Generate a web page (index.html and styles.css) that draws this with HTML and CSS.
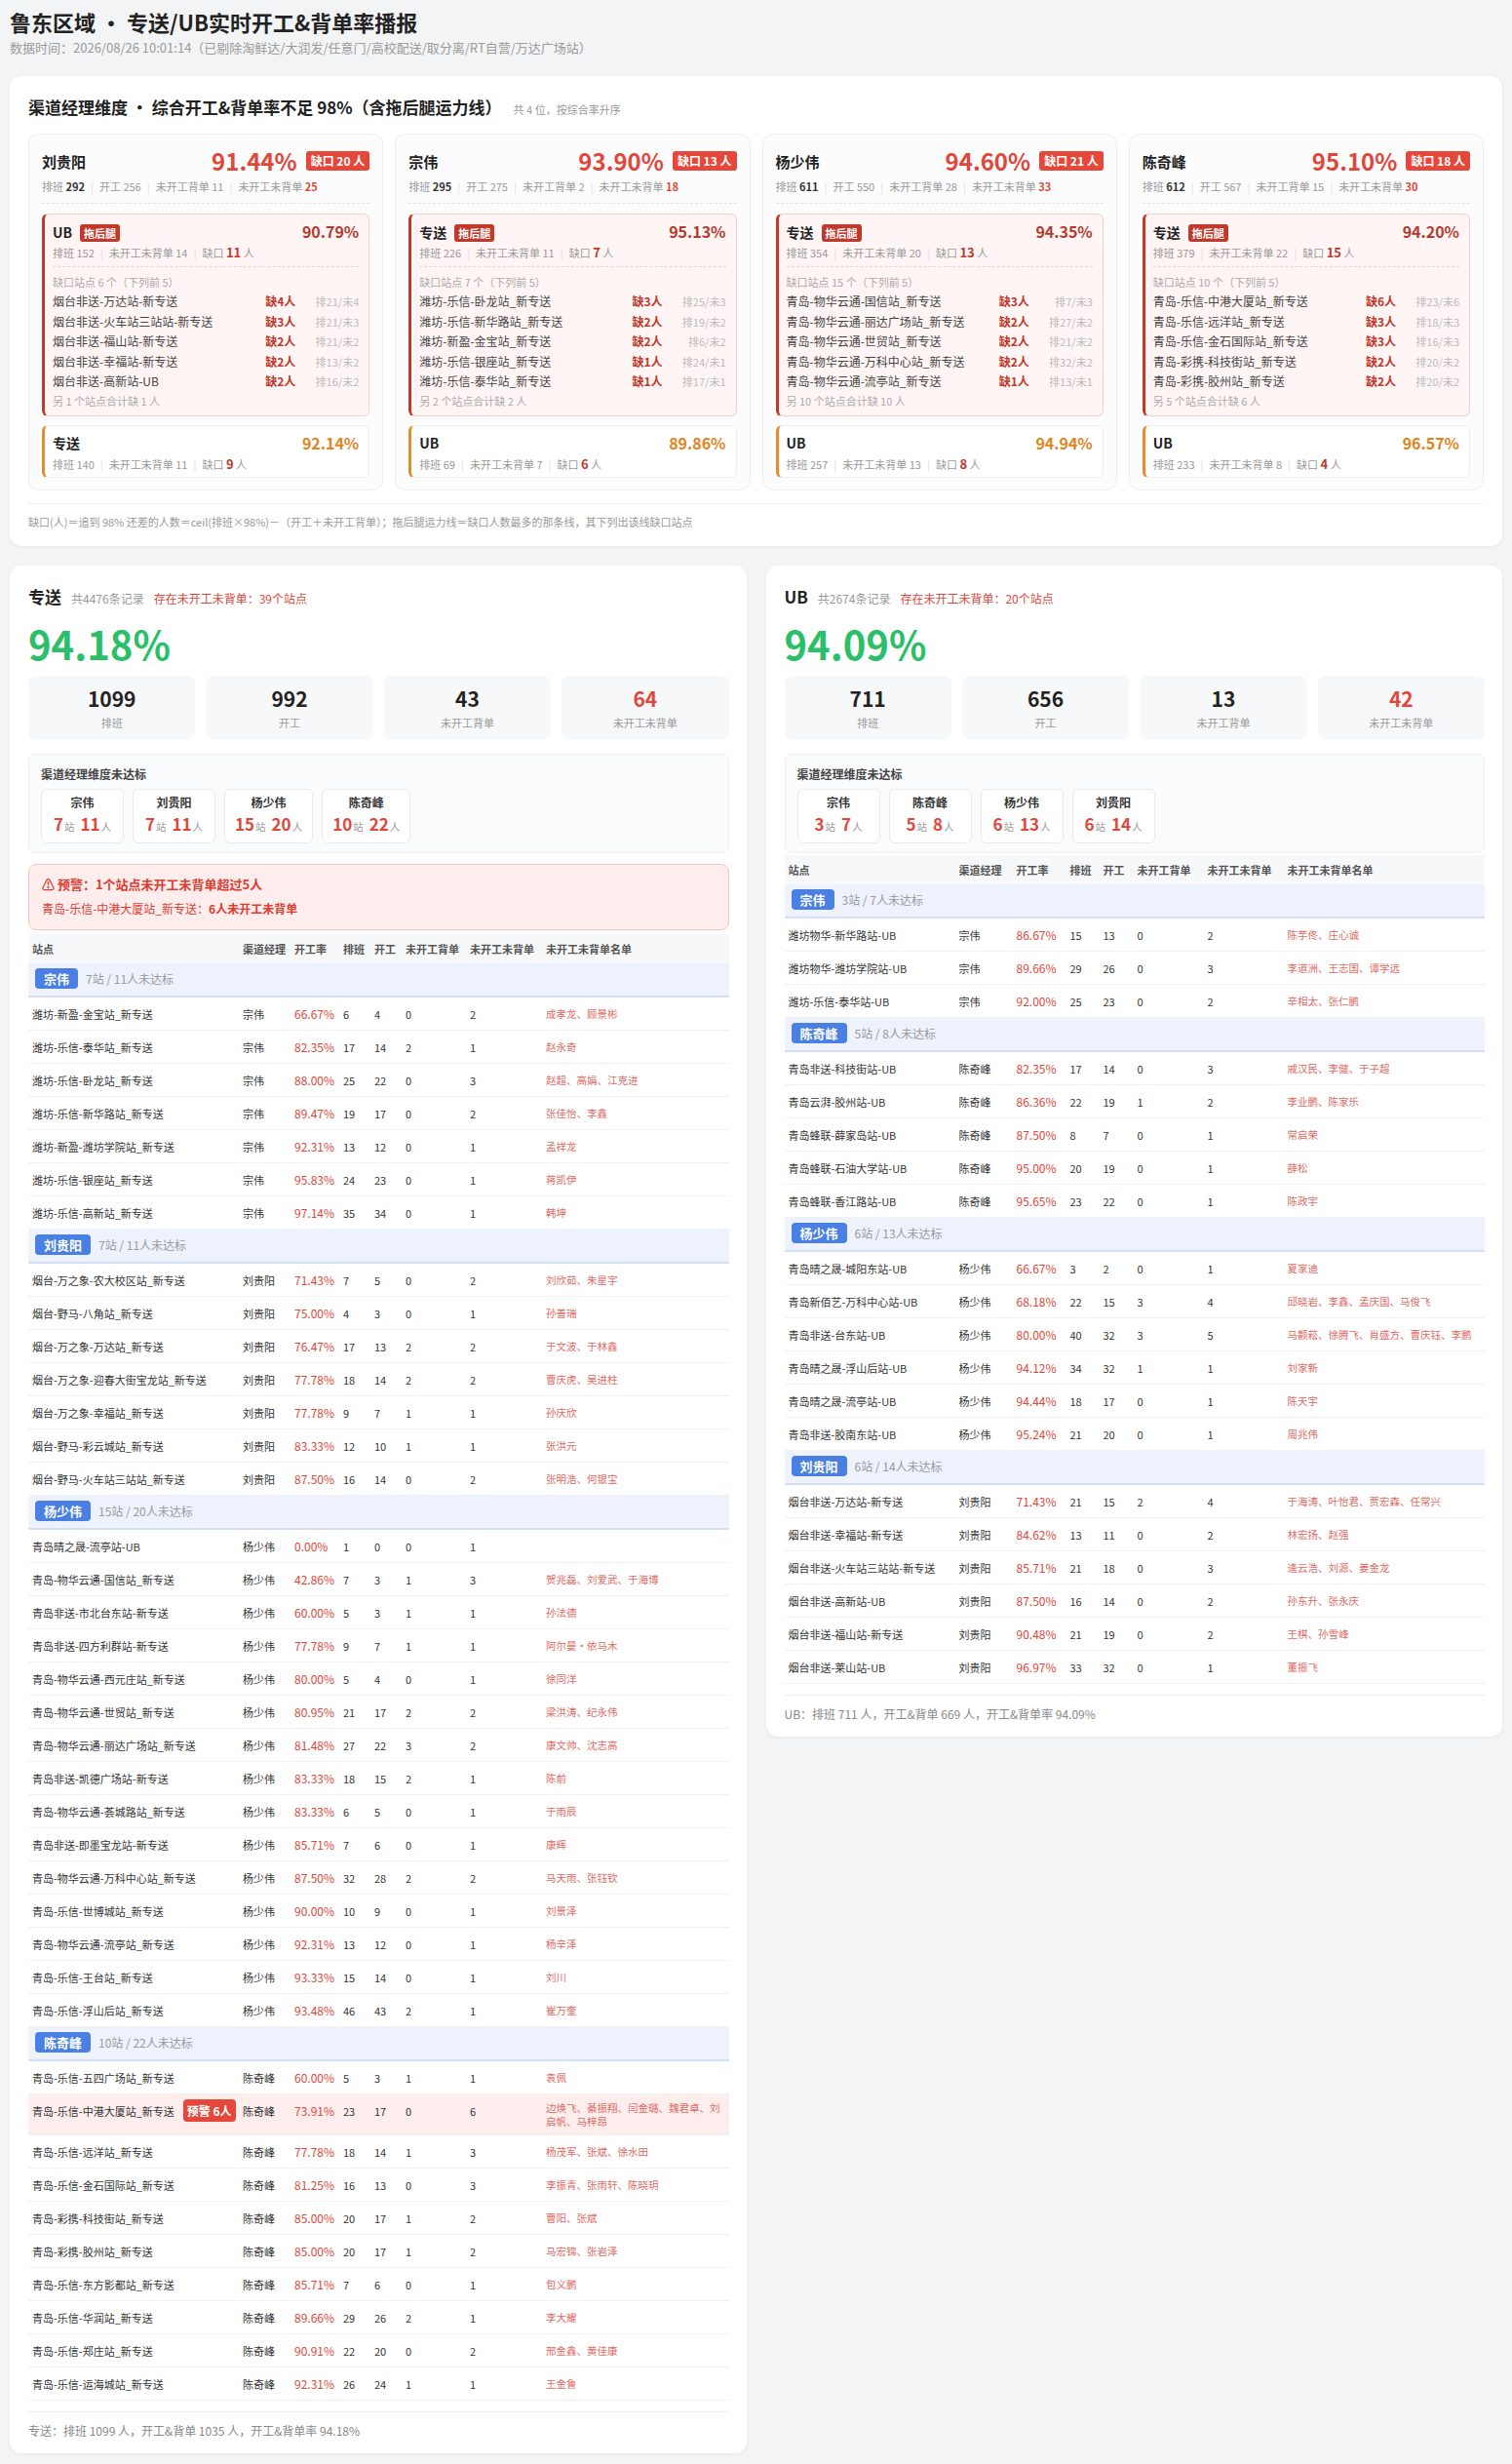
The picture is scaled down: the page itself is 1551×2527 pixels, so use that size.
FILE: index.html
```html
<!DOCTYPE html>
<html lang="zh-CN">
<head>
<meta charset="utf-8">
<title>鲁东区域 专送/UB实时开工&背单率播报</title>
<link rel="stylesheet" href="styles.css">
</head>
<body>
<h1 class="page-title">鲁东区域 • 专送/UB实时开工&amp;背单率播报</h1>
<div class="page-sub">数据时间：2026/08/26 10:01:14（已剔除淘鲜达/大润发/任意门/高校配送/取分离/RT自营/万达广场站）</div>

<section class="panel top-panel">
  <div class="sec-title">渠道经理维度 • 综合开工&amp;背单率不足 98%（含拖后腿运力线）<span class="sec-hint">共 4 位，按综合率升序</span></div>
  <div class="cards">
    <!-- card 1 -->
    <div class="mcard">
      <div class="mcard-head"><span class="mname">刘贵阳</span><span class="mright"><span class="mpct">91.44%</span><span class="gap-badge">缺口 20 人</span></span></div>
      <div class="mstats">排班 <b>292</b><span class="sep">|</span>开工 256<span class="sep">|</span>未开工背单 11<span class="sep">|</span>未开工未背单 <b class="r">25</b></div>
      <div class="line-card bad">
        <div class="lc-head"><span><span class="lc-name">UB</span><span class="drag">拖后腿</span></span><span class="lc-pct">90.79%</span></div>
        <div class="lc-stats">排班 152<span class="sep">|</span>未开工未背单 14<span class="sep">|</span>缺口 <b>11</b> 人</div>
        <div class="lc-list">
          <div class="lc-list-title">缺口站点 6 个（下列前 5）</div>
          <div class="lc-rows">
            <div class="lc-row"><span>烟台非送-万达站-新专送</span><span class="lack">缺4人</span><span class="meta">排21/未4</span></div>
            <div class="lc-row"><span>烟台非送-火车站三站站-新专送</span><span class="lack">缺3人</span><span class="meta">排21/未3</span></div>
            <div class="lc-row"><span>烟台非送-福山站-新专送</span><span class="lack">缺2人</span><span class="meta">排21/未2</span></div>
            <div class="lc-row"><span>烟台非送-幸福站-新专送</span><span class="lack">缺2人</span><span class="meta">排13/未2</span></div>
            <div class="lc-row"><span>烟台非送-高新站-UB</span><span class="lack">缺2人</span><span class="meta">排16/未2</span></div>
          </div>
          <div class="lc-more">另 1 个站点合计缺 1 人</div>
        </div>
      </div>
      <div class="line-card ok">
        <div class="lc-head"><span class="lc-name">专送</span><span class="lc-pct">92.14%</span></div>
        <div class="lc-stats">排班 140<span class="sep">|</span>未开工未背单 11<span class="sep">|</span>缺口 <b>9</b> 人</div>
      </div>
    </div>
    <!-- card 2 -->
    <div class="mcard">
      <div class="mcard-head"><span class="mname">宗伟</span><span class="mright"><span class="mpct">93.90%</span><span class="gap-badge">缺口 13 人</span></span></div>
      <div class="mstats">排班 <b>295</b><span class="sep">|</span>开工 275<span class="sep">|</span>未开工背单 2<span class="sep">|</span>未开工未背单 <b class="r">18</b></div>
      <div class="line-card bad">
        <div class="lc-head"><span><span class="lc-name">专送</span><span class="drag">拖后腿</span></span><span class="lc-pct">95.13%</span></div>
        <div class="lc-stats">排班 226<span class="sep">|</span>未开工未背单 11<span class="sep">|</span>缺口 <b>7</b> 人</div>
        <div class="lc-list">
          <div class="lc-list-title">缺口站点 7 个（下列前 5）</div>
          <div class="lc-rows">
            <div class="lc-row"><span>潍坊-乐信-卧龙站_新专送</span><span class="lack">缺3人</span><span class="meta">排25/未3</span></div>
            <div class="lc-row"><span>潍坊-乐信-新华路站_新专送</span><span class="lack">缺2人</span><span class="meta">排19/未2</span></div>
            <div class="lc-row"><span>潍坊-新盈-金宝站_新专送</span><span class="lack">缺2人</span><span class="meta">排6/未2</span></div>
            <div class="lc-row"><span>潍坊-乐信-银座站_新专送</span><span class="lack">缺1人</span><span class="meta">排24/未1</span></div>
            <div class="lc-row"><span>潍坊-乐信-泰华站_新专送</span><span class="lack">缺1人</span><span class="meta">排17/未1</span></div>
          </div>
          <div class="lc-more">另 2 个站点合计缺 2 人</div>
        </div>
      </div>
      <div class="line-card ok">
        <div class="lc-head"><span class="lc-name">UB</span><span class="lc-pct">89.86%</span></div>
        <div class="lc-stats">排班 69<span class="sep">|</span>未开工未背单 7<span class="sep">|</span>缺口 <b>6</b> 人</div>
      </div>
    </div>
    <!-- card 3 -->
    <div class="mcard">
      <div class="mcard-head"><span class="mname">杨少伟</span><span class="mright"><span class="mpct">94.60%</span><span class="gap-badge">缺口 21 人</span></span></div>
      <div class="mstats">排班 <b>611</b><span class="sep">|</span>开工 550<span class="sep">|</span>未开工背单 28<span class="sep">|</span>未开工未背单 <b class="r">33</b></div>
      <div class="line-card bad">
        <div class="lc-head"><span><span class="lc-name">专送</span><span class="drag">拖后腿</span></span><span class="lc-pct">94.35%</span></div>
        <div class="lc-stats">排班 354<span class="sep">|</span>未开工未背单 20<span class="sep">|</span>缺口 <b>13</b> 人</div>
        <div class="lc-list">
          <div class="lc-list-title">缺口站点 15 个（下列前 5）</div>
          <div class="lc-rows">
            <div class="lc-row"><span>青岛-物华云通-国信站_新专送</span><span class="lack">缺3人</span><span class="meta">排7/未3</span></div>
            <div class="lc-row"><span>青岛-物华云通-丽达广场站_新专送</span><span class="lack">缺2人</span><span class="meta">排27/未2</span></div>
            <div class="lc-row"><span>青岛-物华云通-世贸站_新专送</span><span class="lack">缺2人</span><span class="meta">排21/未2</span></div>
            <div class="lc-row"><span>青岛-物华云通-万科中心站_新专送</span><span class="lack">缺2人</span><span class="meta">排32/未2</span></div>
            <div class="lc-row"><span>青岛-物华云通-流亭站_新专送</span><span class="lack">缺1人</span><span class="meta">排13/未1</span></div>
          </div>
          <div class="lc-more">另 10 个站点合计缺 10 人</div>
        </div>
      </div>
      <div class="line-card ok">
        <div class="lc-head"><span class="lc-name">UB</span><span class="lc-pct">94.94%</span></div>
        <div class="lc-stats">排班 257<span class="sep">|</span>未开工未背单 13<span class="sep">|</span>缺口 <b>8</b> 人</div>
      </div>
    </div>
    <!-- card 4 -->
    <div class="mcard">
      <div class="mcard-head"><span class="mname">陈奇峰</span><span class="mright"><span class="mpct">95.10%</span><span class="gap-badge">缺口 18 人</span></span></div>
      <div class="mstats">排班 <b>612</b><span class="sep">|</span>开工 567<span class="sep">|</span>未开工背单 15<span class="sep">|</span>未开工未背单 <b class="r">30</b></div>
      <div class="line-card bad">
        <div class="lc-head"><span><span class="lc-name">专送</span><span class="drag">拖后腿</span></span><span class="lc-pct">94.20%</span></div>
        <div class="lc-stats">排班 379<span class="sep">|</span>未开工未背单 22<span class="sep">|</span>缺口 <b>15</b> 人</div>
        <div class="lc-list">
          <div class="lc-list-title">缺口站点 10 个（下列前 5）</div>
          <div class="lc-rows">
            <div class="lc-row"><span>青岛-乐信-中港大厦站_新专送</span><span class="lack">缺6人</span><span class="meta">排23/未6</span></div>
            <div class="lc-row"><span>青岛-乐信-远洋站_新专送</span><span class="lack">缺3人</span><span class="meta">排18/未3</span></div>
            <div class="lc-row"><span>青岛-乐信-金石国际站_新专送</span><span class="lack">缺3人</span><span class="meta">排16/未3</span></div>
            <div class="lc-row"><span>青岛-彩携-科技街站_新专送</span><span class="lack">缺2人</span><span class="meta">排20/未2</span></div>
            <div class="lc-row"><span>青岛-彩携-胶州站_新专送</span><span class="lack">缺2人</span><span class="meta">排20/未2</span></div>
          </div>
          <div class="lc-more">另 5 个站点合计缺 6 人</div>
        </div>
      </div>
      <div class="line-card ok">
        <div class="lc-head"><span class="lc-name">UB</span><span class="lc-pct">96.57%</span></div>
        <div class="lc-stats">排班 233<span class="sep">|</span>未开工未背单 8<span class="sep">|</span>缺口 <b>4</b> 人</div>
      </div>
    </div>
  </div>
  <div class="note">缺口(人)＝追到 98% 还差的人数＝ceil(排班×98%)－（开工＋未开工背单）；拖后腿运力线＝缺口人数最多的那条线，其下列出该线缺口站点</div>
</section>

<div class="cols">
  <!-- 专送 -->
  <section class="panel line-panel">
    <div class="lp-head"><span class="lp-title">专送</span><span class="lp-count">共4476条记录</span><span class="lp-warn">存在未开工未背单：39个站点</span></div>
    <div class="big-pct">94.18%</div>
    <div class="stat-grid">
      <div class="stat"><div class="stat-num">1099</div><div class="stat-label">排班</div></div>
      <div class="stat"><div class="stat-num">992</div><div class="stat-label">开工</div></div>
      <div class="stat"><div class="stat-num">43</div><div class="stat-label">未开工背单</div></div>
      <div class="stat"><div class="stat-num red">64</div><div class="stat-label">未开工未背单</div></div>
    </div>
    <div class="mgr-box">
      <div class="mgr-title">渠道经理维度未达标</div>
      <div class="chips">
        <div class="chip"><div class="chip-name">宗伟</div><div class="chip-val"><b>7</b><small>站</small><b>11</b><small>人</small></div></div>
        <div class="chip"><div class="chip-name">刘贵阳</div><div class="chip-val"><b>7</b><small>站</small><b>11</b><small>人</small></div></div>
        <div class="chip"><div class="chip-name">杨少伟</div><div class="chip-val"><b>15</b><small>站</small><b>20</b><small>人</small></div></div>
        <div class="chip"><div class="chip-name">陈奇峰</div><div class="chip-val"><b>10</b><small>站</small><b>22</b><small>人</small></div></div>
      </div>
    </div>
    <div class="alert">
      <div class="alert-title">⚠ 预警：1个站点未开工未背单超过5人</div>
      <div class="alert-detail">青岛-乐信-中港大厦站_新专送：<b>6人未开工未背单</b></div>
    </div>
    <table class="tbl tbl-zs">
      <colgroup><col class="c1"><col class="c2"><col class="c3"><col class="c4"><col class="c5"><col class="c6"><col class="c7"><col></colgroup>
      <thead><tr><th>站点</th><th>渠道经理</th><th>开工率</th><th>排班</th><th>开工</th><th>未开工背单</th><th>未开工未背单</th><th>未开工未背单名单</th></tr></thead>
      <tbody>
        <tr class="grp"><td colspan="8"><span class="grp-chip">宗伟</span><span class="grp-info">7站 / 11人未达标</span></td></tr>
        <tr><td>潍坊-新盈-金宝站_新专送</td><td>宗伟</td><td class="rate">66.67%</td><td>6</td><td>4</td><td>0</td><td>2</td><td class="names">成孝龙、顾景彬</td></tr>
        <tr><td>潍坊-乐信-泰华站_新专送</td><td>宗伟</td><td class="rate">82.35%</td><td>17</td><td>14</td><td>2</td><td>1</td><td class="names">赵永奇</td></tr>
        <tr><td>潍坊-乐信-卧龙站_新专送</td><td>宗伟</td><td class="rate">88.00%</td><td>25</td><td>22</td><td>0</td><td>3</td><td class="names">赵超、高娟、江克进</td></tr>
        <tr><td>潍坊-乐信-新华路站_新专送</td><td>宗伟</td><td class="rate">89.47%</td><td>19</td><td>17</td><td>0</td><td>2</td><td class="names">张佳怡、李鑫</td></tr>
        <tr><td>潍坊-新盈-潍坊学院站_新专送</td><td>宗伟</td><td class="rate">92.31%</td><td>13</td><td>12</td><td>0</td><td>1</td><td class="names">孟祥龙</td></tr>
        <tr><td>潍坊-乐信-银座站_新专送</td><td>宗伟</td><td class="rate">95.83%</td><td>24</td><td>23</td><td>0</td><td>1</td><td class="names">蒋凯伊</td></tr>
        <tr><td>潍坊-乐信-高新站_新专送</td><td>宗伟</td><td class="rate">97.14%</td><td>35</td><td>34</td><td>0</td><td>1</td><td class="names">韩坤</td></tr>
        <tr class="grp"><td colspan="8"><span class="grp-chip">刘贵阳</span><span class="grp-info">7站 / 11人未达标</span></td></tr>
        <tr><td>烟台-万之象-农大校区站_新专送</td><td>刘贵阳</td><td class="rate">71.43%</td><td>7</td><td>5</td><td>0</td><td>2</td><td class="names">刘欣茹、朱星宇</td></tr>
        <tr><td>烟台-野马-八角站_新专送</td><td>刘贵阳</td><td class="rate">75.00%</td><td>4</td><td>3</td><td>0</td><td>1</td><td class="names">孙善瑞</td></tr>
        <tr><td>烟台-万之象-万达站_新专送</td><td>刘贵阳</td><td class="rate">76.47%</td><td>17</td><td>13</td><td>2</td><td>2</td><td class="names">于文波、于林鑫</td></tr>
        <tr><td>烟台-万之象-迎春大街宝龙站_新专送</td><td>刘贵阳</td><td class="rate">77.78%</td><td>18</td><td>14</td><td>2</td><td>2</td><td class="names">曹庆虎、吴进柱</td></tr>
        <tr><td>烟台-万之象-幸福站_新专送</td><td>刘贵阳</td><td class="rate">77.78%</td><td>9</td><td>7</td><td>1</td><td>1</td><td class="names">孙庆欣</td></tr>
        <tr><td>烟台-野马-彩云城站_新专送</td><td>刘贵阳</td><td class="rate">83.33%</td><td>12</td><td>10</td><td>1</td><td>1</td><td class="names">张洪元</td></tr>
        <tr><td>烟台-野马-火车站三站站_新专送</td><td>刘贵阳</td><td class="rate">87.50%</td><td>16</td><td>14</td><td>0</td><td>2</td><td class="names">张明浩、何银宝</td></tr>
        <tr class="grp"><td colspan="8"><span class="grp-chip">杨少伟</span><span class="grp-info">15站 / 20人未达标</span></td></tr>
        <tr><td>青岛晴之晟-流亭站-UB</td><td>杨少伟</td><td class="rate">0.00%</td><td>1</td><td>0</td><td>0</td><td>1</td><td class="names"></td></tr>
        <tr><td>青岛-物华云通-国信站_新专送</td><td>杨少伟</td><td class="rate">42.86%</td><td>7</td><td>3</td><td>1</td><td>3</td><td class="names">贺兆磊、刘爱武、于海博</td></tr>
        <tr><td>青岛非送-市北台东站-新专送</td><td>杨少伟</td><td class="rate">60.00%</td><td>5</td><td>3</td><td>1</td><td>1</td><td class="names">孙法德</td></tr>
        <tr><td>青岛非送-四方利群站-新专送</td><td>杨少伟</td><td class="rate">77.78%</td><td>9</td><td>7</td><td>1</td><td>1</td><td class="names">阿尔曼·依马木</td></tr>
        <tr><td>青岛-物华云通-西元庄站_新专送</td><td>杨少伟</td><td class="rate">80.00%</td><td>5</td><td>4</td><td>0</td><td>1</td><td class="names">徐同洋</td></tr>
        <tr><td>青岛-物华云通-世贸站_新专送</td><td>杨少伟</td><td class="rate">80.95%</td><td>21</td><td>17</td><td>2</td><td>2</td><td class="names">梁洪涛、纪永伟</td></tr>
        <tr><td>青岛-物华云通-丽达广场站_新专送</td><td>杨少伟</td><td class="rate">81.48%</td><td>27</td><td>22</td><td>3</td><td>2</td><td class="names">康文帅、沈志高</td></tr>
        <tr><td>青岛非送-凯德广场站-新专送</td><td>杨少伟</td><td class="rate">83.33%</td><td>18</td><td>15</td><td>2</td><td>1</td><td class="names">陈前</td></tr>
        <tr><td>青岛-物华云通-荟城路站_新专送</td><td>杨少伟</td><td class="rate">83.33%</td><td>6</td><td>5</td><td>0</td><td>1</td><td class="names">于雨辰</td></tr>
        <tr><td>青岛非送-即墨宝龙站-新专送</td><td>杨少伟</td><td class="rate">85.71%</td><td>7</td><td>6</td><td>0</td><td>1</td><td class="names">康辉</td></tr>
        <tr><td>青岛-物华云通-万科中心站_新专送</td><td>杨少伟</td><td class="rate">87.50%</td><td>32</td><td>28</td><td>2</td><td>2</td><td class="names">马天雨、张钰钦</td></tr>
        <tr><td>青岛-乐信-世博城站_新专送</td><td>杨少伟</td><td class="rate">90.00%</td><td>10</td><td>9</td><td>0</td><td>1</td><td class="names">刘景泽</td></tr>
        <tr><td>青岛-物华云通-流亭站_新专送</td><td>杨少伟</td><td class="rate">92.31%</td><td>13</td><td>12</td><td>0</td><td>1</td><td class="names">杨辛泽</td></tr>
        <tr><td>青岛-乐信-王台站_新专送</td><td>杨少伟</td><td class="rate">93.33%</td><td>15</td><td>14</td><td>0</td><td>1</td><td class="names">刘川</td></tr>
        <tr><td>青岛-乐信-浮山后站_新专送</td><td>杨少伟</td><td class="rate">93.48%</td><td>46</td><td>43</td><td>2</td><td>1</td><td class="names">崔万奎</td></tr>
        <tr class="grp"><td colspan="8"><span class="grp-chip">陈奇峰</span><span class="grp-info">10站 / 22人未达标</span></td></tr>
        <tr><td>青岛-乐信-五四广场站_新专送</td><td>陈奇峰</td><td class="rate">60.00%</td><td>5</td><td>3</td><td>1</td><td>1</td><td class="names">袁佩</td></tr>
        <tr class="warn"><td>青岛-乐信-中港大厦站_新专送<span class="warn-badge">预警 6人</span></td><td>陈奇峰</td><td class="rate">73.91%</td><td>23</td><td>17</td><td>0</td><td>6</td><td class="names">边焕飞、綦振翔、闫金璐、魏君卓、刘启帆、马梓昂</td></tr>
        <tr><td>青岛-乐信-远洋站_新专送</td><td>陈奇峰</td><td class="rate">77.78%</td><td>18</td><td>14</td><td>1</td><td>3</td><td class="names">杨茂军、张斌、徐水田</td></tr>
        <tr><td>青岛-乐信-金石国际站_新专送</td><td>陈奇峰</td><td class="rate">81.25%</td><td>16</td><td>13</td><td>0</td><td>3</td><td class="names">李振青、张雨轩、陈晓玥</td></tr>
        <tr><td>青岛-彩携-科技街站_新专送</td><td>陈奇峰</td><td class="rate">85.00%</td><td>20</td><td>17</td><td>1</td><td>2</td><td class="names">曹阳、张斌</td></tr>
        <tr><td>青岛-彩携-胶州站_新专送</td><td>陈奇峰</td><td class="rate">85.00%</td><td>20</td><td>17</td><td>1</td><td>2</td><td class="names">马宏锦、张岩泽</td></tr>
        <tr><td>青岛-乐信-东方影都站_新专送</td><td>陈奇峰</td><td class="rate">85.71%</td><td>7</td><td>6</td><td>0</td><td>1</td><td class="names">包义鹏</td></tr>
        <tr><td>青岛-乐信-华润站_新专送</td><td>陈奇峰</td><td class="rate">89.66%</td><td>29</td><td>26</td><td>2</td><td>1</td><td class="names">李大耀</td></tr>
        <tr><td>青岛-乐信-郑庄站_新专送</td><td>陈奇峰</td><td class="rate">90.91%</td><td>22</td><td>20</td><td>0</td><td>2</td><td class="names">邢金鑫、黄佳康</td></tr>
        <tr><td>青岛-乐信-运海城站_新专送</td><td>陈奇峰</td><td class="rate">92.31%</td><td>26</td><td>24</td><td>1</td><td>1</td><td class="names">王金鲁</td></tr>
      </tbody>
    </table>
    <div class="foot">专送：排班 1099 人，开工&amp;背单 1035 人，开工&amp;背单率 94.18%</div>
  </section>

  <!-- UB -->
  <section class="panel line-panel">
    <div class="lp-head"><span class="lp-title">UB</span><span class="lp-count">共2674条记录</span><span class="lp-warn">存在未开工未背单：20个站点</span></div>
    <div class="big-pct">94.09%</div>
    <div class="stat-grid">
      <div class="stat"><div class="stat-num">711</div><div class="stat-label">排班</div></div>
      <div class="stat"><div class="stat-num">656</div><div class="stat-label">开工</div></div>
      <div class="stat"><div class="stat-num">13</div><div class="stat-label">未开工背单</div></div>
      <div class="stat"><div class="stat-num red">42</div><div class="stat-label">未开工未背单</div></div>
    </div>
    <div class="mgr-box">
      <div class="mgr-title">渠道经理维度未达标</div>
      <div class="chips">
        <div class="chip"><div class="chip-name">宗伟</div><div class="chip-val"><b>3</b><small>站</small><b>7</b><small>人</small></div></div>
        <div class="chip"><div class="chip-name">陈奇峰</div><div class="chip-val"><b>5</b><small>站</small><b>8</b><small>人</small></div></div>
        <div class="chip"><div class="chip-name">杨少伟</div><div class="chip-val"><b>6</b><small>站</small><b>13</b><small>人</small></div></div>
        <div class="chip"><div class="chip-name">刘贵阳</div><div class="chip-val"><b>6</b><small>站</small><b>14</b><small>人</small></div></div>
      </div>
    </div>
    <table class="tbl tbl-ub">
      <colgroup><col class="c1"><col class="c2"><col class="c3"><col class="c4"><col class="c5"><col class="c6"><col class="c7"><col></colgroup>
      <thead><tr><th>站点</th><th>渠道经理</th><th>开工率</th><th>排班</th><th>开工</th><th>未开工背单</th><th>未开工未背单</th><th>未开工未背单名单</th></tr></thead>
      <tbody>
        <tr class="grp"><td colspan="8"><span class="grp-chip">宗伟</span><span class="grp-info">3站 / 7人未达标</span></td></tr>
        <tr><td>潍坊物华-新华路站-UB</td><td>宗伟</td><td class="rate">86.67%</td><td>15</td><td>13</td><td>0</td><td>2</td><td class="names">陈芋佟、庄心诚</td></tr>
        <tr><td>潍坊物华-潍坊学院站-UB</td><td>宗伟</td><td class="rate">89.66%</td><td>29</td><td>26</td><td>0</td><td>3</td><td class="names">李道洲、王志国、谭学远</td></tr>
        <tr><td>潍坊-乐信-泰华站-UB</td><td>宗伟</td><td class="rate">92.00%</td><td>25</td><td>23</td><td>0</td><td>2</td><td class="names">辛相太、张仁鹏</td></tr>
        <tr class="grp"><td colspan="8"><span class="grp-chip">陈奇峰</span><span class="grp-info">5站 / 8人未达标</span></td></tr>
        <tr><td>青岛非送-科技街站-UB</td><td>陈奇峰</td><td class="rate">82.35%</td><td>17</td><td>14</td><td>0</td><td>3</td><td class="names">戚汉民、李健、于子超</td></tr>
        <tr><td>青岛云湃-胶州站-UB</td><td>陈奇峰</td><td class="rate">86.36%</td><td>22</td><td>19</td><td>1</td><td>2</td><td class="names">李业鹏、陈家乐</td></tr>
        <tr><td>青岛蜂联-薛家岛站-UB</td><td>陈奇峰</td><td class="rate">87.50%</td><td>8</td><td>7</td><td>0</td><td>1</td><td class="names">常启荣</td></tr>
        <tr><td>青岛蜂联-石油大学站-UB</td><td>陈奇峰</td><td class="rate">95.00%</td><td>20</td><td>19</td><td>0</td><td>1</td><td class="names">薛松</td></tr>
        <tr><td>青岛蜂联-香江路站-UB</td><td>陈奇峰</td><td class="rate">95.65%</td><td>23</td><td>22</td><td>0</td><td>1</td><td class="names">陈政宇</td></tr>
        <tr class="grp"><td colspan="8"><span class="grp-chip">杨少伟</span><span class="grp-info">6站 / 13人未达标</span></td></tr>
        <tr><td>青岛晴之晟-城阳东站-UB</td><td>杨少伟</td><td class="rate">66.67%</td><td>3</td><td>2</td><td>0</td><td>1</td><td class="names">夏家迪</td></tr>
        <tr><td>青岛新佰艺-万科中心站-UB</td><td>杨少伟</td><td class="rate">68.18%</td><td>22</td><td>15</td><td>3</td><td>4</td><td class="names">邱晓岩、李鑫、孟庆国、马俊飞</td></tr>
        <tr><td>青岛非送-台东站-UB</td><td>杨少伟</td><td class="rate">80.00%</td><td>40</td><td>32</td><td>3</td><td>5</td><td class="names">马颧菘、徐腾飞、肖盛方、曹庆钰、李鹏</td></tr>
        <tr><td>青岛晴之晟-浮山后站-UB</td><td>杨少伟</td><td class="rate">94.12%</td><td>34</td><td>32</td><td>1</td><td>1</td><td class="names">刘家新</td></tr>
        <tr><td>青岛晴之晟-流亭站-UB</td><td>杨少伟</td><td class="rate">94.44%</td><td>18</td><td>17</td><td>0</td><td>1</td><td class="names">陈天宇</td></tr>
        <tr><td>青岛非送-胶南东站-UB</td><td>杨少伟</td><td class="rate">95.24%</td><td>21</td><td>20</td><td>0</td><td>1</td><td class="names">周兆伟</td></tr>
        <tr class="grp"><td colspan="8"><span class="grp-chip">刘贵阳</span><span class="grp-info">6站 / 14人未达标</span></td></tr>
        <tr><td>烟台非送-万达站-新专送</td><td>刘贵阳</td><td class="rate">71.43%</td><td>21</td><td>15</td><td>2</td><td>4</td><td class="names">于海涛、叶怡君、贾宏森、任常兴</td></tr>
        <tr><td>烟台非送-幸福站-新专送</td><td>刘贵阳</td><td class="rate">84.62%</td><td>13</td><td>11</td><td>0</td><td>2</td><td class="names">林宏扬、赵强</td></tr>
        <tr><td>烟台非送-火车站三站站-新专送</td><td>刘贵阳</td><td class="rate">85.71%</td><td>21</td><td>18</td><td>0</td><td>3</td><td class="names">逄云浩、刘源、姜金龙</td></tr>
        <tr><td>烟台非送-高新站-UB</td><td>刘贵阳</td><td class="rate">87.50%</td><td>16</td><td>14</td><td>0</td><td>2</td><td class="names">孙东升、张永庆</td></tr>
        <tr><td>烟台非送-福山站-新专送</td><td>刘贵阳</td><td class="rate">90.48%</td><td>21</td><td>19</td><td>0</td><td>2</td><td class="names">王棋、孙雪峰</td></tr>
        <tr><td>烟台非送-莱山站-UB</td><td>刘贵阳</td><td class="rate">96.97%</td><td>33</td><td>32</td><td>0</td><td>1</td><td class="names">董振飞</td></tr>
      </tbody>
    </table>
    <div class="foot">UB：排班 711 人，开工&amp;背单 669 人，开工&amp;背单率 94.09%</div>
  </section>
</div>
</body>
</html>
```

FILE: styles.css
```css
* { box-sizing: border-box; }
html, body { margin: 0; }
body {
  background: #f3f4f6;
  font-family: "Noto Sans CJK SC", "Noto Sans", "Liberation Sans", sans-serif;
  color: #222;
  padding: 8px 10px 10px;
}
.page-title { margin: 0; font-size: 22px; line-height: 28px; font-weight: 700; color: #222; }
.page-sub { margin-top: 4px; font-size: 13px; line-height: 18px; color: #9a9a9a; }

.panel {
  background: #fff;
  border-radius: 12px;
  box-shadow: 0 1px 4px rgba(0, 0, 0, 0.05);
}

/* top panel */
.top-panel { margin-top: 20px; padding: 20px 19px 17px; }
.sec-title { font-size: 17px; line-height: 24px; font-weight: 700; color: #222; margin-bottom: 13px; }
.sec-hint { font-size: 11px; font-weight: 400; color: #999; margin-left: 12px; }
.cards { display: grid; grid-template-columns: repeat(4, 1fr); gap: 12px; }
.mcard {
  background: #fcfcfd;
  border: 1px solid #eceef1;
  border-radius: 10px;
  padding: 13px 13px 12px;
}
.mcard-head { display: flex; justify-content: space-between; align-items: center; height: 28px; }
.mname { font-size: 15px; font-weight: 700; color: #222; }
.mright { display: flex; align-items: center; }
.mpct { font-size: 24px; line-height: 28px; font-weight: 700; color: #e0473a; }
.gap-badge {
  margin-left: 9px;
  background: #e5483b;
  color: #fff;
  font-size: 12px;
  font-weight: 700;
  line-height: 20px;
  padding: 0 5px;
  border-radius: 3px;
}
.mstats {
  margin-top: 4px;
  font-size: 11px;
  line-height: 16px;
  color: #999;
  padding-bottom: 9px;
  border-bottom: 1px dashed #e3e3e3;
  white-space: nowrap;
}
.mstats b { color: #333; font-weight: 700; }
.mstats b.r { color: #e0473a; }
.sep { color: #ddd; margin: 0 6px; }

.line-card {
  border: 1px solid #eee;
  border-left: 3px solid #c0392b;
  border-radius: 6px;
  padding: 7px 10px 7px 8px;
}
.line-card.bad { margin-top: 10px; background: #fff5f4; border-color: #f2d2cf; border-left-color: #c0392b; }
.line-card.ok { margin-top: 9px; background: #fff; border-color: #eeeeee; border-left-color: #e8892a; padding-bottom: 5px; }
.lc-head { display: flex; justify-content: space-between; align-items: center; height: 20px; }
.lc-name { font-size: 14px; font-weight: 700; color: #222; }
.drag {
  margin-left: 8px;
  background: #c0392b;
  color: #fff;
  font-size: 11px;
  font-weight: 700;
  line-height: 17px;
  padding: 1px 4px;
  border-radius: 3px;
}
.lc-pct { font-size: 16px; font-weight: 700; color: #b53a2e; }
.line-card.ok .lc-pct { color: #e0841c; }
.lc-stats { margin-top: 4px; font-size: 11px; line-height: 16px; color: #999; white-space: nowrap; }
.lc-stats b { color: #c0392b; font-size: 13px; font-weight: 700; }
.lc-list { margin-top: 6px; border-top: 1px dashed #ecd3d0; padding-top: 7px; }
.lc-list-title { font-size: 11px; line-height: 16px; color: #aaa; }
.lc-rows { margin-top: 2px; }
.lc-row {
  display: grid;
  grid-template-columns: 1fr 46px 50px;
  font-size: 12px;
  line-height: 20.5px;
  color: #444;
  white-space: nowrap;
}
.lc-row .lack { color: #c0392b; font-weight: 700; }
.lc-row .meta { color: #bbb; font-size: 11px; text-align: right; }
.lc-more { margin-top: 1px; font-size: 11px; line-height: 16px; color: #aaa; }
.note {
  margin-top: 13px;
  border-top: 1px solid #eee;
  padding-top: 10px;
  font-size: 11px;
  line-height: 16px;
  color: #999;
}

/* line panels */
.cols { display: grid; grid-template-columns: 1fr 1fr; gap: 20px; margin-top: 20px; align-items: start; }
.line-panel { padding: 20px 18px 14px 19px; }
.lp-head { display: flex; align-items: baseline; line-height: 24px; white-space: nowrap; }
.lp-title { font-size: 17px; font-weight: 700; color: #222; }
.lp-count { font-size: 12px; color: #999; margin-left: 10px; }
.lp-warn { font-size: 12px; color: #e0473a; margin-left: 10px; }
.big-pct { margin-top: 11px; font-size: 40px; line-height: 46px; font-weight: 700; color: #2bbf69; }
.stat-grid { display: grid; grid-template-columns: repeat(4, 1fr); gap: 11px; margin-top: 10px; }
.stat { background: #f7f8fa; border-radius: 8px; height: 66px; padding-top: 10px; text-align: center; }
.stat-num { font-size: 21px; line-height: 26px; font-weight: 700; color: #222; }
.stat-num.red { color: #e0473a; }
.stat-label { margin-top: 4px; font-size: 11px; line-height: 16px; color: #999; }

.mgr-box {
  margin-top: 14px;
  background: #fafbfc;
  border: 1px solid #eef0f3;
  border-radius: 8px;
  padding: 11px 12px 9px;
}
.mgr-title { font-size: 12px; line-height: 18px; font-weight: 700; color: #444; }
.chips { display: flex; gap: 9px; margin-top: 6px; }
.chip {
  min-width: 85px;
  height: 56px;
  padding: 0 10px;
  background: #fff;
  border: 1px solid #e7e9ec;
  border-radius: 6px;
  display: flex;
  flex-direction: column;
  align-items: center;
  justify-content: center;
}
.chip-name { font-size: 12px; line-height: 18px; font-weight: 700; color: #333; }
.chip-val { margin-top: 2px; line-height: 22px; white-space: nowrap; }
.chip-val b { font-size: 17px; font-weight: 700; color: #e0473a; }
.chip-val small { font-size: 10.5px; color: #999; margin: 0 6px 0 1px; }
.chip-val small:last-child { margin-right: 0; }

.alert {
  margin-top: 11px;
  margin-bottom: 4px;
  background: #fdeeed;
  border: 1px solid #f5c8c4;
  border-radius: 8px;
  padding: 11px 13px 12px;
  color: #e03b30;
}
.alert-title { font-size: 13px; line-height: 18px; font-weight: 700; }
.alert-detail { margin-top: 7px; font-size: 12px; line-height: 18px; }
.alert-detail b { font-weight: 700; }

/* tables */
.tbl { width: 100%; border-collapse: collapse; table-layout: fixed; margin-top: 2px; font-size: 11px; }
.tbl th {
  background: #f7f8fa;
  text-align: left;
  font-weight: 700;
  color: #555;
  height: 30px;
  padding: 0 4px;
  white-space: nowrap;
}
.tbl td {
  padding: 9px 4px 8px;
  line-height: 16px;
  vertical-align: top;
  border-bottom: 1px solid #f0f1f3;
  color: #333;
  white-space: nowrap;
}
.tbl td.rate { color: #e0473a; font-size: 12px; }
.tbl td.names { color: #e06a64; white-space: normal; font-size: 10.5px; padding-right: 0; }
.tbl tr.grp td {
  background: #edf2fd;
  border-bottom: 2px solid #d5dff4;
  padding: 5px 7px 6px;
  line-height: 21px;
}
.grp-chip {
  display: inline-block;
  vertical-align: top;
  background: #4a7fe3;
  color: #fff;
  font-size: 13px;
  font-weight: 700;
  line-height: 21px;
  padding: 0 9px;
  border-radius: 4px;
}
.grp-info { font-size: 12px; color: #999; margin-left: 8px; }
.tbl tr.warn td { background: #fdeeed; }
.tbl tr.warn td.names { line-height: 14px; padding-top: 7px; padding-bottom: 6px; }
.warn-badge {
  margin-left: 9px;
  background: #e5483b;
  color: #fff;
  font-size: 12px;
  font-weight: 700;
  padding: 3px 4px;
  border-radius: 4px;
}
.tbl-zs .c1 { width: 216px; }
.tbl-zs .c2 { width: 53px; }
.tbl-zs .c3 { width: 50px; }
.tbl-zs .c4 { width: 32px; }
.tbl-zs .c5 { width: 32px; }
.tbl-zs .c6 { width: 66px; }
.tbl-zs .c7 { width: 78px; }
.tbl-ub .c1 { width: 175px; }
.tbl-ub .c2 { width: 59px; }
.tbl-ub .c3 { width: 55px; }
.tbl-ub .c4 { width: 34px; }
.tbl-ub .c5 { width: 35px; }
.tbl-ub .c6 { width: 72px; }
.tbl-ub .c7 { width: 82px; }
.foot {
  margin-top: 11px;
  border-top: 1px solid #eee;
  padding-top: 10px;
  font-size: 12px;
  line-height: 18px;
  color: #888;
}
```
